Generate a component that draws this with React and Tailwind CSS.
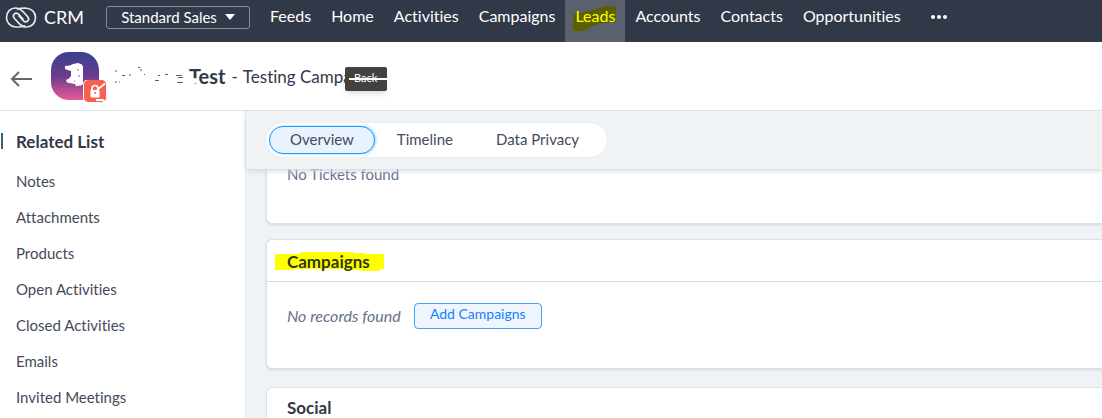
import React from 'react';

const navItems = ['Feeds', 'Home', 'Activities', 'Campaigns', 'Leads', 'Accounts', 'Contacts', 'Opportunities'];
const relatedLists = [
  'Notes',
  'Attachments',
  'Products',
  'Open Activities',
  'Closed Activities',
  'Emails',
  'Invited Meetings',
];
const tabs = ['Overview', 'Timeline', 'Data Privacy'];

function Logo() {
  return (
    <svg className="w-8 h-6" viewBox="0 0 32 24" fill="none" stroke="#e4e7ec" strokeWidth="1.7" strokeLinecap="round" aria-hidden="true">
      <path d="M19.500 21 C17 22 13.500 22 10.500 22 C5 21.500 1.500 17.500 1.500 12.500 C1.500 7 5.500 3 10.500 3 C13.500 3 15.500 4.200 17.500 6.200 L22.500 11.500 C25.500 15 21.500 18.500 18.500 15.800 L14 11" />
      <path d="M12.500 4 C15 3 18.500 3 20.500 3 C26.500 3.200 30.500 7.500 30.500 12.500 C30.500 18 26.500 22 21.500 22 C18.500 22 16.500 20.800 14.500 18.800 L9.500 13.500 C6.500 10 10.500 6.500 13.500 9.200 L18 14" />
    </svg>
  );
}

function Avatar() {
  return (
    <div className="relative w-12 h-12 rounded-[18px] bg-linear-to-b from-[#33418f] via-[#6b3a8d] to-[#ea5795]">
      <svg className="absolute inset-0 w-full h-full" viewBox="0 0 48 48" aria-hidden="true">
        <path d="M14 14 L19 13.500 L22 12 L27 11 L31 12.500 L32 15 L32 32 L30 33.500 L25 34 L24 32 L16 30.500 L15 28 L18 26.500 L20 24 L20 19 L18 18.500 L14 17 Z" fill="#fff" />
        <path d="M26 18h2M27 24h2M23 29h1" stroke="#8a6aa8" />
      </svg>
      <svg className="absolute left-8 top-7 w-6 h-6" viewBox="0 0 24 24" aria-hidden="true">
        <rect x="0.500" y="-0.500" width="23" height="23" rx="5" fill="#f8604f" stroke="#fff" />
        <path d="M9 11V8.500a3 3 0 0 1 6 0V11" stroke="#fff" strokeWidth="1.600" fill="none" />
        <rect x="7.500" y="10" width="9" height="7.500" rx="1" fill="#fff" />
        <circle cx="12" cy="13" r="1" fill="#f8604f" />
        <path d="M14 10 L22 3.500 M13 20 H20 L22 23" stroke="#fff" strokeWidth="1.800" fill="none" />
      </svg>
    </div>
  );
}

export default function App() {
  return (
    <div className="h-screen flex flex-col overflow-hidden bg-white font-['Lato',sans-serif] [font-variant-ligatures:none] text-[#313949]">
      {/* Top navigation */}
      <header className="flex h-[42px] shrink-0 bg-[#313949] text-white text-base">
        <div className="flex h-[34px] items-center pl-[5px]">
          <Logo />
          <span className="ml-[7px] text-lg">CRM</span>
          <button className="ml-[22px] flex h-[23px] w-36 items-center justify-center gap-2 rounded-[3px] border border-[#858b98] text-[15px]">
            Standard Sales
            <svg className="w-[10px] h-[6px]" viewBox="0 0 10 6" fill="#fff" aria-hidden="true">
              <path d="M0 0h10L5 6z" />
            </svg>
          </button>
        </div>
        <nav className="flex ml-[10px]">
          {navItems.map((item) => (
            <a
              key={item}
              href="#"
              className={`relative px-[10px] pt-[4px] leading-6 ${item === 'Leads' ? 'bg-[#5a606d] text-[#ffff00]' : ''}`}
            >
              {item === 'Leads' && (
                <svg className="absolute left-2 top-[5px] w-11 h-[27px]" viewBox="0 0 44 27" aria-hidden="true">
                  <path d="M0 10 L10 7 L20 5 L32 1 H41 L43 3 V17 L30 18 L20 21 L10 26 H0 Z" fill="#5a6000" />
                </svg>
              )}
              <span className="relative">{item}</span>
            </a>
          ))}
          <button className="ml-5 flex h-[34px] items-center gap-[2px]" aria-label="More">
            <span className="w-1 h-1 rounded-full bg-white" />
            <span className="w-1 h-1 rounded-full bg-white" />
            <span className="w-1 h-1 rounded-full bg-white" />
          </button>
        </nav>
      </header>

      {/* Record header */}
      <div className="flex h-[69px] shrink-0 items-center border-b border-[#dce3ec] pl-[10px]">
        <button className="mt-[5px]" aria-label="Back">
          <svg className="w-[22px] h-4" viewBox="0 0 22 16" fill="none" stroke="#666" strokeWidth="2" aria-hidden="true">
            <path d="M22 8H2M9 1L2 8l7 7" />
          </svg>
        </button>
        <div className="ml-[19px]">
          <Avatar />
        </div>
        <svg className="ml-3 w-[78px] h-5" viewBox="0 0 78 20" fill="none" stroke="#59606e" aria-hidden="true">
          <path d="M5 4v2M5 15v2M8 16h1M11 9.500h3M18 9h2M27 1.500h2M30 3v2M33 8.500h1M44 14.500h4M47 9.500h2M54 8.500h3M65 9.500h6M72 11.500h-5M66 16.500h6" />
        </svg>
        <h1 className="relative text-xl font-bold">
          Test
          <svg className="absolute left-0 top-4 w-3 h-2" viewBox="0 0 12 8" fill="#fff" aria-hidden="true">
            <path d="M0 1 L7 0 L9 2 L9 5 L0 7 Z" />
          </svg>
        </h1>
        <span className="ml-[6px] pt-[2px] text-[17px]">-</span>
        <span className="ml-[5px] pt-[2px] text-[17px]">Testing Campa</span>
        <div className="relative -ml-[7px] mt-[5px] flex h-6 w-[42px] items-center justify-center rounded-xs bg-[#424242] text-[11px] text-white shadow-md">
          Back
          <span className="absolute left-1 top-[11px] h-[2px] w-10 bg-white" />
        </div>
      </div>

      <div className="flex flex-1 min-h-0">
        {/* Related list */}
        <aside className="w-[245px] shrink-0 pt-[18px]">
          <h2 className="relative pl-4 text-[17px] leading-[26px] font-bold">
            <span className="absolute left-px top-1 h-4 w-[2px] bg-[#38607d]" />
            Related List
          </h2>
          <ul className="mt-2 text-[15px] leading-9 text-[#434b5b]">
            {relatedLists.map((item) => (
              <li key={item} className="pl-4">
                <a href="#">{item}</a>
              </li>
            ))}
          </ul>
        </aside>

        <main className="flex flex-1 min-w-0 flex-col border-l border-[#e6ebf1] bg-[#eff3f6]">
          <div className="relative z-10 flex h-[58px] shrink-0 items-center bg-[#eff3f6] pl-5 shadow-[0_2px_5px_#cfd7e2]">
            <div className="flex h-[34px] items-center gap-px rounded-full bg-white py-[3px] pl-[3px] pr-[7px] text-[15px] text-[#434b5b] shadow-[0_0_2px_#dce3ec]">
              {tabs.map((tab) => (
                <button
                  key={tab}
                  className={`flex h-7 items-start rounded-full px-5 pt-px border ${tab === 'Overview' ? 'border-[#1a98ff] bg-[#e9f3ff] shadow-[1px_0_3px_#9ccfff]' : 'border-transparent'}`}
                >
                  {tab}
                </button>
              ))}
            </div>
          </div>

          <div className="flex-1 min-h-0 overflow-hidden pl-5 text-[15px]">
            <section className="h-[55px] rounded-bl-md border-b border-l border-[#d8e2ec] bg-white pl-5 text-[#66718a] shadow-sm">
              <p className="leading-[11px]">No Tickets found</p>
            </section>

            <section className="mt-[15px] h-[130px] rounded-l-md border border-r-0 border-[#d8e2ec] bg-white shadow-sm">
              <div className="flex h-[42px] items-center border-b border-[#d0dbe7] pl-5 pt-[2px]">
                <h2 className="relative text-[17px] font-bold">
                  <svg className="absolute -left-3 top-[3px] w-[110px] h-5" viewBox="0 0 110 20" aria-hidden="true">
                    <path d="M0 2H25V0H79V1H90V2H109V17H105V19H87V18H73V17H19V18H0Z" fill="#ff0" />
                  </svg>
                  <span className="relative text-[#31390a]">Campaigns</span>
                </h2>
              </div>
              <div className="flex items-center pl-5 pt-[21px]">
                <p className="text-base italic text-[#66718a]">No records found</p>
                <button className="ml-[13px] flex h-[26px] w-32 items-start justify-center rounded-[4px] border border-[#45a0f8] bg-[#eef5ff] text-sm text-[#1680fb]">
                  Add Campaigns
                </button>
              </div>
            </section>

            <section className="mt-[18px] h-[130px] rounded-l-md border border-r-0 border-[#d8e2ec] bg-white">
              <div className="flex h-10 items-center border-b border-[#d0dbe7] pl-5">
                <h2 className="text-[17px] font-bold">Social</h2>
              </div>
            </section>
          </div>
        </main>
      </div>
    </div>
  );
}
